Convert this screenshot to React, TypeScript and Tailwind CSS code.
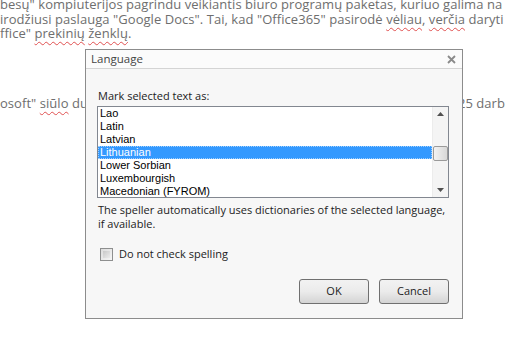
import React from "react";

const Squig = ({ children }: { children: React.ReactNode }) => (
  <span className="underline decoration-wavy decoration-[#e05050] decoration-1 underline-offset-[3px]">{children}</span>
);

const items = ["Lao", "Latin", "Latvian", "Lithuanian", "Lower Sorbian", "Luxembourgish", "Macedonian (FYROM)"];

export default function App() {
  return (
    <div className="relative w-[505px] h-[343px] overflow-hidden bg-white">
      {/* document text */}
      <div
        className="text-[#6e6e6e] text-[13px] leading-[14.5px] tracking-[0.05px] whitespace-nowrap mt-[-3px]"
        style={{ fontFamily: '"Open Sans", sans-serif' }}
      >
        <div>besų" kompiuterijos pagrindu veikiantis biuro programų paketas, kuriuo galima na</div>
        <div>
          irodžiusi paslauga "Google Docs". Tai, kad "Office365" pasirodė <Squig>vėliau</Squig>, <Squig>verčia</Squig> daryti
        </div>
        <div>
          ffice" <Squig>prekinių</Squig> <Squig>ženklų</Squig>.
        </div>
        <div className="mt-[55px] flex justify-between">
          <span>
            osoft" <Squig>siūlo</Squig> du
          </span>
          <span>25 darb</span>
        </div>
      </div>

      {/* dialog */}
      <div
        className="absolute left-[85px] top-[49px] w-[378px] h-[270px] border border-[#8c8c8c] bg-[#f7f7f7] flex flex-col"
        style={{ fontFamily: '"Open Sans", sans-serif' }}
      >
        <div className="h-[19px] flex items-center justify-between border-b border-[#d4d4d4] bg-[#fbfbfb] pl-[5px] pr-[6px]">
          <span className="text-[11.5px] text-[#444] leading-none">Language</span>
          <svg width="9" height="9" viewBox="0 0 9 9">
            <path d="M1 1 L8 8 M8 1 L1 8" stroke="#8a8a8a" strokeWidth="1.8" />
          </svg>
        </div>
        <div className="flex flex-col pl-[11px] pr-[13px] pt-[20px]">
          <div className="text-[11px] leading-[14px] text-[#222] pl-[1px]">Mark selected text as:</div>
          <div className="mt-[3px] h-[92px] border border-[#828790] bg-white flex">
            <div
              className="flex-1 flex flex-col text-[11px] leading-[13px] text-black"
              style={{ fontFamily: '"Liberation Sans", Arial, sans-serif' }}
            >
              {items.map((it) => (
                <div
                  key={it}
                  className={
                    it === "Lithuanian"
                      ? "h-[13px] pl-[1px] bg-[#3399ff] text-white border border-dotted border-[#9fd0ff] leading-[11px]"
                      : "h-[13px] pl-[2px]"
                  }
                >
                  {it}
                </div>
              ))}
            </div>
            <div className="w-[16px] bg-[#f4f4f4] border-l border-[#ececec] flex flex-col items-center justify-between py-[5px] relative">
              <svg width="7" height="4" viewBox="0 0 7 4">
                <path d="M0 4 L3.5 0 L7 4 Z" fill="#505050" />
              </svg>
              <svg width="7" height="4" viewBox="0 0 7 4">
                <path d="M0 0 L3.5 4 L7 0 Z" fill="#505050" />
              </svg>
              <div className="absolute left-[0px] top-[39px] w-[15px] h-[15px] rounded-[2px] border border-[#9a9a9a] bg-gradient-to-r from-[#f2f2f2] to-[#d8d8d8]" />
            </div>
          </div>
          <div className="mt-[5px] text-[11px] leading-[14px] text-[#222] whitespace-nowrap pl-[1px]">
            The speller automatically uses dictionaries of the selected language,
            <br />
            if available.
          </div>
          <div className="mt-[16px] flex items-center gap-[6px] pl-[3px]">
            <div className="w-[13px] h-[13px] border border-[#8e8f8f] bg-gradient-to-br from-[#dcdcdc] to-[#f6f6f6] p-[2px]">
              <div className="w-full h-full bg-gradient-to-br from-[#c8c8c8] to-[#ececec]" />
            </div>
            <span className="text-[11px] leading-[14px] text-[#222]">Do not check spelling</span>
          </div>
          <div className="mt-[18px] flex justify-end gap-[10px]">
            <button className="w-[70px] h-[25px] rounded-[3px] border border-[#707070] bg-gradient-to-b from-[#f2f2f2] via-[#ebebeb] to-[#d4d4d4] text-[11px] text-[#222]">
              OK
            </button>
            <button className="w-[70px] h-[25px] rounded-[3px] border border-[#707070] bg-gradient-to-b from-[#f2f2f2] via-[#ebebeb] to-[#d4d4d4] text-[11px] text-[#222]">
              Cancel
            </button>
          </div>
        </div>
      </div>
    </div>
  );
}
